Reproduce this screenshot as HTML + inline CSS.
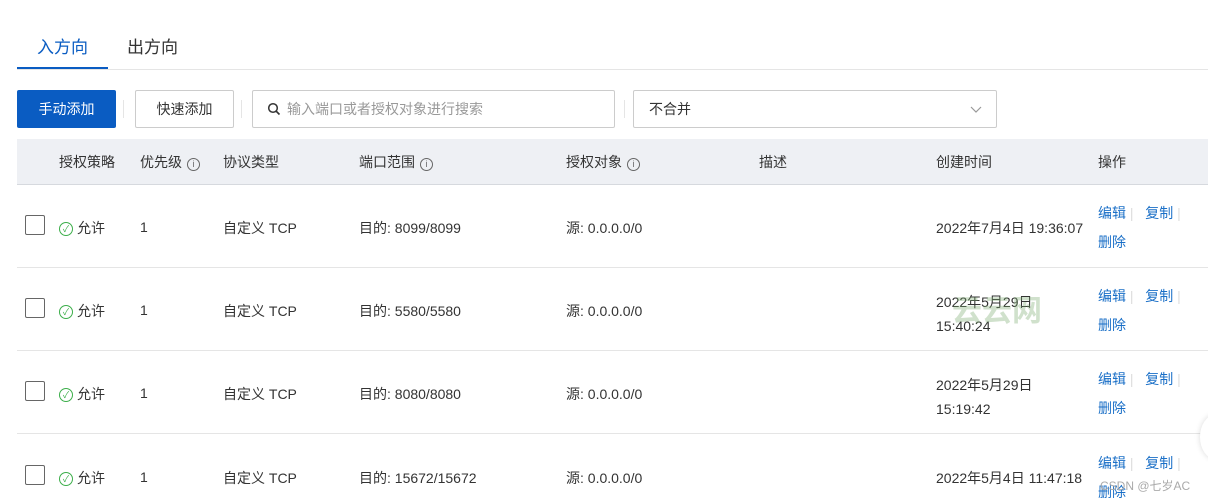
<!DOCTYPE html>
<html><head><meta charset="utf-8"><style>
*{margin:0;padding:0;box-sizing:border-box}
body{width:1208px;height:500px;overflow:hidden;background:#fff;font-family:"Liberation Sans","Noto Sans CJK SC",sans-serif;color:#333;font-size:14px;position:relative}
.a{position:absolute;white-space:nowrap}
.tab{font-size:17px;top:33px}
.line{position:absolute;left:17px;right:0;height:1px;background:#e5e5e5}
.btn{position:absolute;top:90px;height:38px;border-radius:2px;font-size:14px;display:flex;align-items:center;justify-content:center}
.sep{position:absolute;top:100px;width:1px;height:18px;background:#e5e5e5}
.hd{position:absolute;left:17px;right:0;top:139px;height:46px;background:#eef0f4;border-bottom:1px solid #d6d9de}
.info{display:inline-block;width:13px;height:13px;border:1px solid #666;border-radius:50%;font-size:9px;line-height:11px;text-align:center;vertical-align:0px;margin-left:5px;color:#666}
.cb{position:absolute;left:25px;width:20px;height:20px;border:1px solid #666;border-radius:2px;background:#fff}
.ok{display:inline-block;width:14px;height:14px;border:1px solid #3cae4a;border-radius:50%;color:#3cae4a;font-size:9px;line-height:12px;text-align:center;vertical-align:1px;margin-right:4px}
.lk{color:#1a6fc7}
.rs{position:absolute;left:17px;right:0;height:1px;background:#e5e5e5}
</style></head><body>
<div class="a tab" style="left:37px;color:#0a5cc2">入方向</div>
<div class="a tab" style="left:127px;color:#333">出方向</div>
<div class="line" style="top:69px"></div>
<div class="a" style="left:17px;top:67px;width:91px;height:2px;background:#0a5cc2"></div>

<div class="btn" style="left:17px;width:99px;background:#0a5cc2;color:#fff">手动添加</div>
<div class="sep" style="left:123px"></div>
<div class="btn" style="left:135px;width:99px;border:1px solid #ccc;color:#333">快速添加</div>
<div class="sep" style="left:241px"></div>
<div class="btn" style="left:252px;width:363px;border:1px solid #ccc;justify-content:flex-start;padding-left:14px;color:#999"><svg width="14" height="14" viewBox="0 0 14 14" style="margin-right:6px"><circle cx="6" cy="6" r="4.3" fill="none" stroke="#333" stroke-width="1.5"/><path d="M9 9l3.5 3.5" stroke="#333" stroke-width="1.6"/></svg>输入端口或者授权对象进行搜索</div>
<div class="sep" style="left:624px"></div>
<div class="btn" style="left:633px;width:364px;border:1px solid #ccc;justify-content:flex-start;padding-left:15px;color:#333">不合并<svg style="position:absolute;right:14px;top:15px" width="12" height="8" viewBox="0 0 12 8"><path d="M1 1l5 5 5-5" fill="none" stroke="#999" stroke-width="1.2"/></svg></div>

<div class="hd"></div>
<div class="a" style="left:59px;top:152px">授权策略</div>
<div class="a" style="left:140px;top:152px">优先级<span class="info">i</span></div>
<div class="a" style="left:223px;top:152px">协议类型</div>
<div class="a" style="left:359px;top:152px">端口范围<span class="info">i</span></div>
<div class="a" style="left:566px;top:152px">授权对象<span class="info">i</span></div>
<div class="a" style="left:759px;top:152px">描述</div>
<div class="a" style="left:936px;top:152px">创建时间</div>
<div class="a" style="left:1098px;top:152px">操作</div>

<div class="cb" style="top:215px"></div>
<div class="a" style="left:59px;top:218px"><span class="ok">✓</span>允许</div>
<div class="a" style="left:140px;top:219px">1</div>
<div class="a" style="left:223px;top:218px">自定义 TCP</div>
<div class="a" style="left:359px;top:218px">目的: 8099/8099</div>
<div class="a" style="left:566px;top:218px">源: 0.0.0.0/0</div>
<div class="a" style="left:936px;top:218px">2022年7月4日 19:36:07</div>
<div class="a lk" style="left:1098px;top:203px">编辑 <span style="color:#ddd">|</span>&nbsp;&nbsp; 复制 <span style="color:#ddd">|</span></div>
<div class="a lk" style="left:1098px;top:232px">删除</div>
<div class="rs" style="top:267px"></div>

<div class="cb" style="top:298px"></div>
<div class="a" style="left:59px;top:301px"><span class="ok">✓</span>允许</div>
<div class="a" style="left:140px;top:302px">1</div>
<div class="a" style="left:223px;top:301px">自定义 TCP</div>
<div class="a" style="left:359px;top:301px">目的: 5580/5580</div>
<div class="a" style="left:566px;top:301px">源: 0.0.0.0/0</div>
<div class="a" style="left:936px;top:290px;line-height:24px">2022年5月29日<br>15:40:24</div>
<div class="a" style="left:952px;top:286px;font-size:30px;color:rgba(120,170,110,0.35);font-weight:bold">云云网</div>
<div class="a lk" style="left:1098px;top:286px">编辑 <span style="color:#ddd">|</span>&nbsp;&nbsp; 复制 <span style="color:#ddd">|</span></div>
<div class="a lk" style="left:1098px;top:315px">删除</div>
<div class="rs" style="top:350px"></div>

<div class="cb" style="top:381px"></div>
<div class="a" style="left:59px;top:384px"><span class="ok">✓</span>允许</div>
<div class="a" style="left:140px;top:385px">1</div>
<div class="a" style="left:223px;top:384px">自定义 TCP</div>
<div class="a" style="left:359px;top:384px">目的: 8080/8080</div>
<div class="a" style="left:566px;top:384px">源: 0.0.0.0/0</div>
<div class="a" style="left:936px;top:373px;line-height:24px">2022年5月29日<br>15:19:42</div>
<div class="a lk" style="left:1098px;top:369px">编辑 <span style="color:#ddd">|</span>&nbsp;&nbsp; 复制 <span style="color:#ddd">|</span></div>
<div class="a lk" style="left:1098px;top:398px">删除</div>
<div class="rs" style="top:433px"></div>

<div class="cb" style="top:465px"></div>
<div class="a" style="left:59px;top:468px"><span class="ok">✓</span>允许</div>
<div class="a" style="left:140px;top:469px">1</div>
<div class="a" style="left:223px;top:468px">自定义 TCP</div>
<div class="a" style="left:359px;top:468px">目的: 15672/15672</div>
<div class="a" style="left:566px;top:468px">源: 0.0.0.0/0</div>
<div class="a" style="left:936px;top:468px">2022年5月4日 11:47:18</div>
<div class="a lk" style="left:1098px;top:453px">编辑 <span style="color:#ddd">|</span>&nbsp;&nbsp; 复制 <span style="color:#ddd">|</span></div>
<div class="a lk" style="left:1098px;top:482px">删除</div>
<div class="a" style="left:1100px;top:477px;font-size:12px;color:#aaa">CSDN @七岁AC</div>
<div class="a" style="left:1200px;top:415px;width:30px;height:44px;border-radius:50%;background:#fff;box-shadow:0 0 6px rgba(0,0,0,.15)"></div>
</body></html>
